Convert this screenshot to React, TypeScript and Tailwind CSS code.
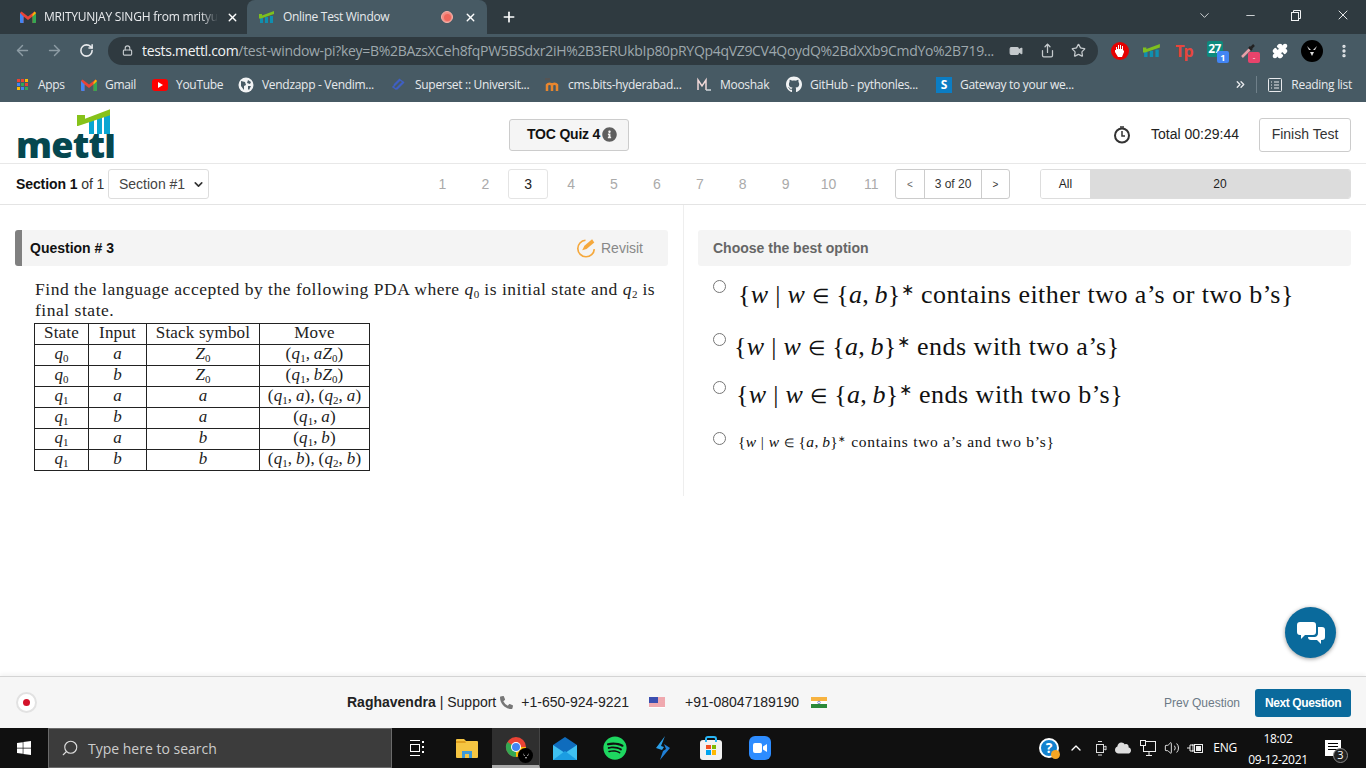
import { ArrowLeft, ArrowRight, ChevronDown, ChevronsRight, Minus, MoreVertical, Plus, RotateCw, Share, Star, Video, X, Lock, Puzzle, ChevronUp, Volume2, Search } from "lucide-react";
import { FaGithub, FaWindows, FaSpotify, FaPhoneAlt, FaCloud, FaInfoCircle } from "react-icons/fa";
import type { ReactNode } from "react";

const ui = { fontFamily: '"Open Sans", "Noto Sans", sans-serif' };

function GmailIcon() {
  return (
    <svg width="16" height="12" viewBox="0 0 16 12">
      <path d="M0 2v9a1 1 0 0 0 1 1h2.500V5.500L8 9l4.500-3.500V12H15a1 1 0 0 0 1-1V2l-1.500-1.500L8 5.500 1.500.5z" fill="#ea4335" />
      <path d="M0 2v9a1 1 0 0 0 1 1h2.500V5.500z" fill="#4285f4" />
      <path d="M16 2v9a1 1 0 0 1-1 1h-2.500V5.500z" fill="#34a853" />
      <path d="M12.500 3.500 14.500.5 16 2l-3.500 3.500z" fill="#fbbc04" />
    </svg>
  );
}

function MettlMark({ size = 16 }: { size?: number }) {
  return (
    <svg width={size} height={size * 0.75} viewBox="0 0 16 12">
      <rect x="1" y="7" width="3" height="5" fill="#0f8fb0" />
      <rect x="6" y="6" width="3" height="6" fill="#0f8fb0" />
      <rect x="11" y="5" width="3" height="7" fill="#0f8fb0" />
      <path d="M0 3h3v1.500L15 0v3L2 7.500H0z" fill="#7ebf1e" />
    </svg>
  );
}

function Bookmark({ icon, label, className }: { icon: ReactNode; label: string; className: string }) {
  return (
    <div className={`flex items-center gap-[8px] ${className}`}>
      <span className="flex w-[16px] shrink-0 justify-center">{icon}</span>
      <span className="whitespace-nowrap text-[12px] tracking-[-0.3px] text-[#e8eaed]">{label}</span>
    </div>
  );
}

function ExtCell({ children }: { children: ReactNode }) {
  return <div className="flex h-[28px] w-[32px] items-center justify-center">{children}</div>;
}

function BrowserChrome() {
  return (
    <div style={ui} className="shrink-0">
      <div className="flex h-[34px] items-end bg-[#2f3a40] pl-[8px]">
        <div className="flex h-[34px] w-[239px] items-center pl-[12px] pr-[8px]">
          <GmailIcon />
          <span className="ml-[8px] whitespace-nowrap text-[12px] tracking-[-0.22px] text-[#e8eaed] [mask-image:linear-gradient(to_right,black_90%,transparent)]">MRITYUNJAY SINGH from mrityu</span>
          <X size={13} strokeWidth={2.5} className="ml-auto text-white" />
        </div>
        <div className="flex h-[34px] w-[240px] items-center rounded-t-[8px] bg-[#475a64] pl-[12px] pr-[10px]">
          <MettlMark />
          <span className="ml-[8px] text-[12px] tracking-[-0.3px] text-[#e8eaed]">Online Test Window</span>
          <span className="ml-auto flex h-[12px] w-[12px] items-center justify-center rounded-full border border-[#f8b4ab] bg-[#f28b82]">
            <span className="h-[7px] w-[7px] rounded-full bg-[#ee675c]" />
          </span>
          <X size={13} strokeWidth={2.5} className="ml-[11px] text-white" />
        </div>
        <div className="flex h-[34px] w-[44px] items-center justify-center">
          <Plus size={16} strokeWidth={2.5} className="text-white" />
        </div>
        <div className="ml-auto flex h-[30px] items-center self-start text-[#f1f3f4]">
          <ChevronDown size={15} strokeWidth={1.3} className="mr-[32px]" />
          <Minus size={13} strokeWidth={1.5} className="mr-[33px]" />
          <svg width="12" height="12" viewBox="0 0 12 12" className="mr-[33px]" fill="none" stroke="currentColor">
            <rect x="1.500" y="3.500" width="7" height="8" />
            <path d="M3.500 3.500V1.500h7v8h-2" />
          </svg>
          <X size={16} strokeWidth={1.4} className="mr-[15px]" />
        </div>
      </div>
      <div className="flex h-[33px] items-center bg-[#475a64] pl-[14px]">
        <ArrowLeft size={17} className="text-[#8d9ca4]" />
        <ArrowRight size={17} className="ml-[15px] text-[#8d9ca4]" />
        <RotateCw size={15} strokeWidth={2.5} className="ml-[16px] text-[#e8eaed]" />
        <div className="ml-[14px] flex h-[28px] w-[990px] items-center rounded-full bg-[#2f3a40] pl-[14px]">
          <Lock size={11} strokeWidth={2.5} className="text-[#c5cacd]" />
          <span className="ml-[9px] w-[856px] overflow-hidden whitespace-nowrap text-[14px] tracking-[-0.31px] text-[#9ea8ad]">
            <span className="text-[#f1f3f4]">tests.mettl.com</span>/test-window-pi?key=B%2BAzsXCeh8fqPW5BSdxr2iH%2B3ERUkbIp80pRYQp4qVZ9CV4QoydQ%2BdXXb9CmdYo%2B719...
          </span>
          <Video size={14} fill="#c5cacd" className="ml-[11px] text-[#c5cacd]" />
          <Share size={15} className="ml-[17px] text-[#c5cacd]" />
          <Star size={15} className="ml-[16px] text-[#c5cacd]" />
        </div>
        <div className="ml-[6px] flex items-center">
          <ExtCell>
            <span className="flex h-[18px] w-[18px] items-center justify-center rounded-full bg-[#e60000]">
              <svg width="10" height="13" viewBox="0 0 10 13"><path d="M1 6V3h1v2h1V1h1v4h1V1h1v4h1V2h1v5l1-1v2l-2 5H3L0 8V6z" fill="#fff" /></svg>
            </span>
          </ExtCell>
          <ExtCell><MettlMark size={18} /></ExtCell>
          <ExtCell><span className="text-[16px] font-bold leading-none tracking-[-1px] text-[#e8453c]">Tp</span></ExtCell>
          <ExtCell>
            <span className="relative -ml-[3px] -mt-[3px] flex h-[16px] w-[16px] items-center justify-center rounded-[2px] bg-[#0d8a7d] text-[12px] font-bold leading-none tracking-[-0.5px] text-white">
              27
              <span className="absolute -bottom-[6px] -right-[6px] flex h-[12px] w-[12px] items-center justify-center rounded-[2px] bg-[#4285f4] text-[9px]">1</span>
            </span>
          </ExtCell>
          <ExtCell>
            <span className="relative flex h-[20px] w-[18px] items-center justify-center">
              <svg width="16" height="16" viewBox="0 0 16 16"><path d="M2 14 10 6" stroke="#e8a0a8" strokeWidth="2.500" /><path d="M9 4l3 3M11 5l3-3" stroke="#222" strokeWidth="2.500" /></svg>
              <span className="absolute -bottom-[2px] -right-[3px] flex h-[11px] w-[12px] items-center justify-center rounded-[2px] bg-[#e8436b] text-[8px] leading-none text-white">-</span>
            </span>
          </ExtCell>
          <ExtCell><Puzzle size={16} fill="#fff" className="text-white" /></ExtCell>
          <ExtCell>
            <span className="flex h-[22px] w-[22px] items-center justify-center rounded-full bg-black">
              <svg width="12" height="12" viewBox="0 0 12 12"><path d="M1 1l4 4H3zM11 1 7 5h2zM4 7h4L6 11z" fill="#ddd" /></svg>
            </span>
          </ExtCell>
          <ExtCell><MoreVertical size={16} strokeWidth={3} className="text-[#e8eaed]" /></ExtCell>
        </div>
      </div>
      <div className="flex h-[35px] items-center bg-[#475a64] pl-[14px]">
        <Bookmark className="w-[67px]" label="Apps" icon={
          <span className="grid grid-cols-3 gap-[1px]">
            {["#ea4335", "#ea4335", "#fbbc04", "#4285f4", "#34a853", "#ea4335", "#fbbc04", "#4285f4", "#34a853"].map((c, i) => (
              <span key={i} className="h-[3px] w-[3px]" style={{ backgroundColor: c }} />
            ))}
          </span>
        } />
        <Bookmark className="w-[71px]" label="Gmail" icon={<GmailIcon />} />
        <Bookmark className="w-[86px]" label="YouTube" icon={
          <span className="flex h-[12px] w-[16px] items-center justify-center rounded-[3px] bg-[#ff0000]">
            <span className="h-0 w-0 border-y-[3px] border-l-[5px] border-y-transparent border-l-white" />
          </span>
        } />
        <Bookmark className="w-[153px]" label="Vendzapp - Vendim..." icon={
          <svg width="16" height="16" viewBox="0 0 16 16"><circle cx="8" cy="8" r="7.500" fill="#f1f3f4" /><path d="M3 4l4 1 1 3-2 1 0 4-3-4zM10 3l3 2-1 2-3-1zM10 9l3 0-2 4-1-1z" fill="#475a64" /></svg>
        } />
        <Bookmark className="w-[153px]" label="Superset :: Universit..." icon={
          <svg width="16" height="16" viewBox="0 0 16 16" fill="none" stroke="#3f5fc4" strokeWidth="1.500"><path d="M2 10 9 3l3 2-7 7zM6 12l7-7M3 8l6-6" /></svg>
        } />
        <Bookmark className="w-[152px]" label="cms.bits-hyderabad..." icon={
          <svg width="16" height="13" viewBox="0 0 16 13" fill="none" stroke="#e8862e" strokeWidth="2.500"><path d="M3 13V7a3 3 0 0 1 5 0v6M8 7a3 3 0 0 1 5 0v6" /><path d="M1 1h5" stroke="#555" /></svg>
        } />
        <Bookmark className="w-[90px]" label="Mooshak" icon={
          <svg width="16" height="16" viewBox="0 0 16 16" fill="none" stroke="#f0d8d8" strokeWidth="1.500"><path d="M2 13V3l4 6 4-6v10" /><path d="M10 13h5" stroke="#d0d8dc" /></svg>
        } />
        <Bookmark className="w-[150px]" label="GitHub - pythonles..." icon={<FaGithub size={17} className="text-[#f1f3f4]" />} />
        <Bookmark label="Gateway to your we..." className="" icon={
          <span className="flex h-[16px] w-[16px] items-center justify-center bg-[#0b7dc4] text-[12px] font-bold leading-none text-white">S</span>
        } />
        <ChevronsRight size={13} strokeWidth={2.5} className="ml-auto text-[#e8eaed]" />
        <span className="ml-[9px] h-[17px] w-px bg-[#6f808a]" />
        <svg width="14" height="14" viewBox="0 0 14 14" className="ml-[11px]" fill="none" stroke="#e8eaed">
          <rect x="0.500" y="0.500" width="13" height="13" rx="1" />
          <path d="M3 4h1M3 7h1M3 10h1M6 4h5M6 7h5M6 10h5" />
        </svg>
        <span className="ml-[9px] mr-[14px] text-[12px] tracking-[-0.3px] text-[#e8eaed]">Reading list</span>
      </div>
    </div>
  );
}

function MettlLogo() {
  return (
    <div className="relative h-[48px] w-[100px]">
      <span className="absolute bottom-[-8px] left-0 text-[36px] font-extrabold leading-none tracking-[-0.8px] text-[#05474f]" style={{ fontFamily: '"Open Sans", sans-serif' }}>mettl</span>
      <svg width="100" height="48" viewBox="0 0 100 48" className="absolute left-0 top-0">
        <rect x="60" y="0" width="38" height="27" fill="#fff" />
        <rect x="73" y="10" width="5" height="17" fill="#0aa6d2" />
        <rect x="81" y="8" width="5" height="19" fill="#0aa6d2" />
        <rect x="88" y="6" width="6" height="21" fill="#0aa6d2" />
        <path d="M61 8h8v3.700L94 2.300v6L62 19h-1z" fill="#86c21a" />
      </svg>
    </div>
  );
}

function PageHeader() {
  return (
    <div className="flex h-[62px] items-center border-b border-[#e8e8e8] pl-[16px] pr-[15px] pt-[4px]">
      <div className="-mt-[8px]"><MettlLogo /></div>
      <div className="ml-[393px] flex h-[32px] w-[120px] items-center gap-[2px] rounded-[3px] border border-[#ccc] bg-[#f5f5f5] pl-[17px] text-[14px] font-bold tracking-[-0.2px] text-[#111]">
        TOC Quiz 4
        <FaInfoCircle size={15} className="text-[#5f5f5f]" />
      </div>
      <svg width="18" height="18" viewBox="0 0 18 18" className="ml-auto" fill="none" stroke="#333" strokeWidth="2">
        <circle cx="9" cy="9.500" r="7" />
        <path d="M9 5v5h3" strokeWidth="1.500" />
        <path d="M7 1h4" strokeWidth="1.500" />
      </svg>
      <span className="ml-[20px] text-[14px] text-[#222]">Total 00:29:44</span>
      <button className="ml-[20px] h-[34px] w-[92px] rounded-[3px] border border-[#ccc] bg-white text-[14px] text-[#333]">Finish Test</button>
    </div>
  );
}

function SectionBar() {
  const nums = [1, 2, 3, 4, 5, 6, 7, 8, 9, 10, 11];
  return (
    <div className="flex h-[41px] items-center border-b border-[#e4e4e4] pl-[16px] pr-[15px] text-[14px]">
      <div className="flex w-[92px] whitespace-nowrap tracking-[-0.1px]">
        <span className="font-bold text-[#111]">Section 1</span>
        <span className="ml-[4px] text-[#333]">of 1</span>
      </div>
      <div className="flex h-[30px] w-[101px] items-center whitespace-nowrap rounded-[3px] border border-[#ddd] pl-[10px] text-[#444]">
        Section #1
        <ChevronDown size={13} strokeWidth={3} className="ml-[7px] text-[#333]" />
      </div>
      <div className="ml-[212px] flex w-[474px]">
        {nums.map((n) => (
          <span key={n} className={n === 3
            ? "mx-[1.450px] flex h-[30px] w-[40px] items-center justify-center rounded-[3px] border border-[#e4e4e4] text-[#222]"
            : "flex h-[30px] w-[42.900px] items-center justify-center text-[#aaa]"}>{n}</span>
        ))}
      </div>
      <div className="flex h-[30px] w-[115px] rounded-[3px] border border-[#ccc] text-[12px] text-[#333]">
        <span className="flex w-[28px] items-center justify-center text-[10px] text-[#666]">&lt;</span>
        <span className="flex w-[58px] items-center justify-center border-x border-[#ccc]">3 of 20</span>
        <span className="flex flex-1 items-center justify-center text-[10px]">&gt;</span>
      </div>
      <div className="ml-[30px] flex h-[30px] w-[311px] overflow-hidden rounded-[3px] border border-[#ddd] text-[12px] text-[#222]">
        <span className="flex w-[49px] items-center justify-center bg-white">All</span>
        <span className="flex flex-1 items-center justify-center bg-[#dcdcdc]">20</span>
      </div>
    </div>
  );
}

const mathFont = { fontFamily: '"Liberation Serif", "Times New Roman", serif' };

function Q() {
  return <span className="italic">q</span>;
}

function Sub({ children }: { children: ReactNode }) {
  return <sub className="text-[11px] not-italic leading-none tracking-normal">{children}</sub>;
}

function Cell({ v }: { v: ReactNode }) {
  return <div className="flex items-center justify-center whitespace-nowrap border-b border-l border-[#222] pb-[3px] [&:nth-child(4n)]:border-r">{v}</div>;
}

function PdaTable() {
  const q = (n: number) => <span><Q /><Sub>{n}</Sub></span>;
  const z = <span><i>Z</i><Sub>0</Sub></span>;
  const pair = (n: number, s: ReactNode) => <span>({q(n)},&thinsp;{s})</span>;
  const rows: ReactNode[][] = [
    [q(0), <i>a</i>, z, <span>({q(1)},&thinsp;<i>a</i>{z})</span>],
    [q(0), <i>b</i>, z, <span>({q(1)},&thinsp;<i>b</i>{z})</span>],
    [q(1), <i>a</i>, <i>a</i>, <span>{pair(1, <i>a</i>)},&thinsp;{pair(2, <i>a</i>)}</span>],
    [q(1), <i>b</i>, <i>a</i>, pair(1, <i>a</i>)],
    [q(1), <i>a</i>, <i>b</i>, pair(1, <i>b</i>)],
    [q(1), <i>b</i>, <i>b</i>, <span>{pair(1, <i>b</i>)},&thinsp;{pair(2, <i>b</i>)}</span>],
  ];
  return (
    <div className="mt-[2px] grid w-[336px] grid-cols-[54px_58px_113px_111px] auto-rows-[21px] border-t border-[#222] text-[17px] leading-none tracking-[0.2px] text-[#222]" style={mathFont}>
      {["State", "Input", "Stack symbol", "Move"].map((h) => <Cell key={h} v={h} />)}
      {rows.flatMap((r, i) => r.map((v, j) => <Cell key={`${i}-${j}`} v={v} />))}
    </div>
  );
}

function MathSet({ tracking }: { tracking: string }) {
  return (
    <span className={tracking}>
      {"{"}<i>w</i> | <i>w</i> <span className="text-[0.78em]">∈</span> {"{"}<i>a</i>,&thinsp;<i>b</i>{"}"}<sup className="text-[0.6em]">∗</sup>
    </span>
  );
}

function OptionRow({ className, children }: { className: string; children: ReactNode }) {
  return (
    <div className={`flex items-start ${className}`}>
      <span className="mt-[1px] h-[13px] w-[13px] shrink-0 rounded-full border border-[#767676] bg-white" />
      {children}
    </div>
  );
}

function QuestionPane() {
  return (
    <div className="flex">
      <div className="w-[683px] pb-[25px] pl-[15px] pr-[15px] pt-[25px]">
        <div className="flex h-[36px] items-center rounded-[3px] border-l-[7px] border-[#808080] bg-[#f4f4f4] pl-[8px] pr-[25px]">
          <span className="text-[14px] font-bold text-[#111]">Question # 3</span>
          <svg width="25" height="22" viewBox="0 0 22 20" className="ml-auto" fill="none" stroke="#f5a83c" strokeWidth="1.500">
            <path d="M11 3a7.500 7.500 0 1 0 8 8" />
            <path d="M8 12l2-4 7-6 2 3-7 6z" fill="#f5a83c" stroke="none" />
          </svg>
          <span className="ml-[3px] text-[14px] text-[#888]">Revisit</span>
        </div>
        <div className="pl-[20px] pt-[13px]">
          <p className="w-[626px] text-[17.500px] leading-[21px] tracking-[0.53px] text-[#222]" style={mathFont}>
            Find the language accepted by the following PDA where <Q /><Sub>0</Sub> is initial state and <Q /><Sub>2</Sub> is final state.
          </p>
          <div className="-ml-[1px]"><PdaTable /></div>
        </div>
      </div>
      <div className="h-[291px] w-[683px] border-l border-[#eee] pl-[14px] pr-[15px] pt-[25px]">
        <div className="flex h-[36px] items-center rounded-[3px] bg-[#f4f4f4] pl-[15px] text-[14px] font-bold text-[#666]">Choose the best option</div>
        <div className="pl-[15px] text-[#111]" style={mathFont}>
          <OptionRow className="mt-[13px] h-[53px]">
            <span className="ml-[12px] whitespace-nowrap text-[26px] leading-[32px] tracking-[0.48px]">
              <MathSet tracking="tracking-[0.3px]" /> contains either two a’s or two b’s{"}"}
            </span>
          </OptionRow>
          <OptionRow className="h-[48px]">
            <span className="ml-[8px] -mt-[1px] whitespace-nowrap text-[26px] leading-[32px] tracking-[0.5px]">
              <MathSet tracking="tracking-[0.3px]" /> ends with two a’s{"}"}
            </span>
          </OptionRow>
          <OptionRow className="h-[51px]">
            <span className="ml-[10px] -mt-[1px] whitespace-nowrap text-[26px] leading-[32px] tracking-[0.5px]">
              <MathSet tracking="tracking-[0.3px]" /> ends with two b’s{"}"}
            </span>
          </OptionRow>
          <OptionRow className="">
            <span className="ml-[12px] mt-[1px] whitespace-nowrap text-[15.500px] leading-[20px] tracking-[0.72px]">
              <MathSet tracking="tracking-[0.4px]" /> contains two a’s and two b’s{"}"}
            </span>
          </OptionRow>
        </div>
      </div>
    </div>
  );
}

function ChatBubble() {
  return (
    <div className="absolute bottom-[18px] right-[30px] flex h-[51px] w-[51px] items-center justify-center rounded-full bg-[#0a6a9c] shadow-[0_1px_4px_rgba(0,0,0,0.4)]">
      <svg width="28" height="24" viewBox="0 0 28 24" fill="#fff">
        <path d="M3 1h13a3 3 0 0 1 3 3v7a3 3 0 0 1-3 3H8l-4 4v-4H3a3 3 0 0 1-3-3V4a3 3 0 0 1 3-3z" />
        <path d="M21 6h4a3 3 0 0 1 3 3v7a3 3 0 0 1-3 3h-1v4l-4-4h-6a3 3 0 0 1-3-3h7a4 4 0 0 0 3-4z" />
      </svg>
    </div>
  );
}

function Flag({ kind }: { kind: "us" | "in" }) {
  if (kind === "us") {
    return (
      <svg width="16" height="11" viewBox="0 0 16 11">
        <rect width="16" height="11" fill="#fff" />
        <path d="M0 1h16M0 3h16M0 5h16M0 7h16M0 9h16" stroke="#e0525e" />
        <rect width="9" height="6" fill="#3c4fb0" />
      </svg>
    );
  }
  return (
    <svg width="16" height="11" viewBox="0 0 16 11">
      <rect width="16" height="4" fill="#f7b340" />
      <rect y="4" width="16" height="3" fill="#fff" />
      <rect y="7" width="16" height="4" fill="#2c8a3a" />
      <circle cx="8" cy="5.500" r="1.300" fill="none" stroke="#3c4fb0" strokeWidth=".6" />
    </svg>
  );
}

function PageFooter() {
  return (
    <div className="flex h-[52px] shrink-0 items-center border-t border-[#d4d4d4] bg-[#f6f6f6] pl-[16px] pr-[15px] text-[14px] text-[#222] shadow-[0_-2px_4px_rgba(0,0,0,0.05)]">
      <span className="flex h-[21px] w-[21px] items-center justify-center rounded-full border-[2px] border-[#e2e2e2] bg-white">
        <span className="h-[7px] w-[7px] rounded-full bg-[#d3122a]" />
      </span>
      <span className="ml-[310px] font-bold">Raghavendra</span>
      <span className="ml-[4px]">| Support</span>
      <FaPhoneAlt size={13} className="ml-[4px] text-[#777]" />
      <span className="ml-[8px]">+1-650-924-9221</span>
      <span className="ml-[20px]"><Flag kind="us" /></span>
      <span className="ml-[20px]">+91-08047189190</span>
      <span className="ml-[12px]"><Flag kind="in" /></span>
      <span className="ml-auto text-[12px] text-[#6c7a86]">Prev Question</span>
      <button className="ml-[15px] h-[28px] w-[96px] rounded-[3px] bg-[#0a6a9c] text-[12px] font-bold tracking-[-0.4px] text-white">Next Question</button>
    </div>
  );
}

function Taskbar() {
  return (
    <div style={ui} className="flex h-[40px] shrink-0 items-center bg-[#101010] text-white">
      <div className="flex w-[48px] justify-center"><FaWindows size={16} /></div>
      <div className="flex h-full w-[344px] items-center border border-[#6a6a6a] bg-[#3c3c3c] pl-[12px]">
        <Search size={18} strokeWidth={1.500} className="-scale-x-100 text-[#ddd]" />
        <span className="ml-[9px] text-[14px] text-[#ccc]">Type here to search</span>
      </div>
      <div className="flex w-[49px] justify-center">
        <svg width="16" height="18" viewBox="0 0 16 18" fill="none" stroke="#fff">
          <path d="M1 1.500h10M1 16.500h10" />
          <rect x="1.500" y="5.500" width="9" height="7" />
          <path d="M14 2v2M14 7v2M14 12v2" strokeWidth="2" />
        </svg>
      </div>
      <div className="flex w-[51px] justify-center">
        <svg width="22" height="20" viewBox="0 0 22 20">
          <path d="M0 2a1 1 0 0 1 1-1h7l2 2h11a1 1 0 0 1 1 1v15a1 1 0 0 1-1 1H1a1 1 0 0 1-1-1z" fill="#f5c542" />
          <path d="M0 3h9l1 2H0z" fill="#e0a020" />
          <path d="M6 20v-7h10v7h-3v-4H9v4z" fill="#3f9ad8" />
        </svg>
      </div>
      <div className="relative flex h-full w-[48px] items-center justify-center border-b-[3px] border-r border-b-[#aaa] border-r-[#444] bg-[#2f2f2f]">
        <svg width="22" height="22" viewBox="0 0 22 22">
          <circle cx="11" cy="11" r="10" fill="#ea4335" />
          <path d="M11 11 2.300 6A10 10 0 0 0 11 21z" fill="#34a853" />
          <path d="M11 11h10a10 10 0 0 1-10 10z" fill="#fbbc04" />
          <circle cx="11" cy="11" r="5" fill="#fff" />
          <circle cx="11" cy="11" r="4" fill="#4285f4" />
        </svg>
        <span className="absolute bottom-[2px] right-[6px] flex h-[15px] w-[15px] items-center justify-center rounded-full bg-black">
          <svg width="8" height="8" viewBox="0 0 8 8"><path d="M1 1l2 3H2zM7 1 5 4h1zM3 5h2L4 7z" fill="#ccc" /></svg>
        </span>
      </div>
      <div className="flex w-[50px] justify-center">
        <svg width="24" height="23" viewBox="0 0 24 23"><path d="M12 0 0 8v15h24V8z" fill="#0f6cbd" /><path d="M0 8l12 8 12-8v15H0z" fill="#3fc1f2" /><path d="M0 23l12-9 12 9z" fill="#1b9de2" /></svg>
      </div>
      <div className="flex w-[49px] justify-center"><FaSpotify size={24} className="text-[#1ed760]" /></div>
      <div className="flex w-[47px] justify-center">
        <svg width="14" height="24" viewBox="0 0 14 24"><path d="M9 0 0 12l6 2 2-3-3-1z" fill="#2b9fe8" /><path d="M8 8l6 4L4 24l3-9 3-2z" fill="#1f7fd6" /></svg>
      </div>
      <div className="flex w-[50px] justify-center">
        <span className="relative mt-[3px] grid h-[20px] w-[22px] grid-cols-2 gap-[1px] rounded-[3px] bg-[#f2f2f2] px-[6px] py-[5px]">
          <span className="bg-[#f25022]" /><span className="bg-[#7fba00]" /><span className="bg-[#00a4ef]" /><span className="bg-[#ffb900]" />
          <span className="absolute -top-[4px] left-[5px] h-[6px] w-[12px] rounded-t-[3px] border-[2px] border-b-0 border-[#29b6f6]" />
        </span>
      </div>
      <div className="flex w-[48px] justify-center">
        <span className="flex h-[24px] w-[22px] items-center justify-center rounded-[6px] bg-[#2d8cff]">
          <svg width="14" height="10" viewBox="0 0 14 10" fill="#fff"><rect width="9" height="10" rx="2" /><path d="m10 3.500 4-2.500v8l-4-2.500z" /></svg>
        </span>
      </div>
      <div className="ml-auto flex items-center">
        <span className="relative flex h-[20px] w-[20px] items-center justify-center rounded-full border-[2px] border-white bg-[#1382cf] text-[14px] font-bold leading-none">
          ?
          <span className="absolute -bottom-[3px] -right-[3px] h-[9px] w-[9px] rounded-full bg-[#f5a623]" />
        </span>
        <ChevronUp size={16} className="ml-[9px]" />
        <svg width="12" height="16" viewBox="0 0 12 16" className="ml-[11px]" fill="none" stroke="#ddd"><rect x="1.500" y="4.500" width="7" height="8" /><path d="M9 7l2-1v4l-2-1M3 1.500h4M3 15h4" /></svg>
        <FaCloud size={16} className="ml-[8px] text-[#ddd]" />
        <svg width="16" height="16" viewBox="0 0 16 16" className="ml-[9px]" fill="none" stroke="#eee"><rect x="3.500" y="1.500" width="12" height="10" /><rect x="0.500" y="0.500" width="5" height="5" fill="#101010" /><path d="M9 12v3M6 15.500h6" /></svg>
        <Volume2 size={16} strokeWidth={1.300} className="ml-[8px]" />
        <svg width="16" height="12" viewBox="0 0 16 12" className="ml-[7px]" fill="none" stroke="#eee"><rect x="7.500" y="2.500" width="8" height="8" /><rect x="9" y="4" width="5" height="5" fill="#eee" stroke="none" /><path d="M0 6h3M3 3h3v6H3zM6 4v-2M6 8v2" /></svg>
        <span className="ml-[10px] text-[12px] tracking-[-0.2px]">ENG</span>
        <div className="ml-[12px] flex w-[58px] flex-col items-center pt-[2px] text-[12px] leading-[21px] tracking-[-0.3px]">
          <span>18:02</span>
          <span className="whitespace-nowrap">09-12-2021</span>
        </div>
        <span className="relative ml-[18px] mr-[25px] flex h-[16px] w-[16px] flex-col gap-[2px] bg-white p-[3px]">
          <span className="h-px bg-black" /><span className="h-px bg-black" /><span className="h-px bg-black" />
          <span className="absolute -bottom-[7px] -right-[7px] flex h-[15px] w-[15px] items-center justify-center rounded-full border border-[#888] bg-[#222] text-[11px] text-white">3</span>
        </span>
      </div>
    </div>
  );
}

export default function App() {
  return (
    <div className="flex h-[768px] w-[1366px] flex-col overflow-hidden bg-white" style={{ fontFamily: '"Liberation Sans", Arial, sans-serif' }}>
      <BrowserChrome />
      <div className="relative min-h-0 flex-1">
        <PageHeader />
        <SectionBar />
        <QuestionPane />
        <ChatBubble />
      </div>
      <PageFooter />
      <Taskbar />
    </div>
  );
}
